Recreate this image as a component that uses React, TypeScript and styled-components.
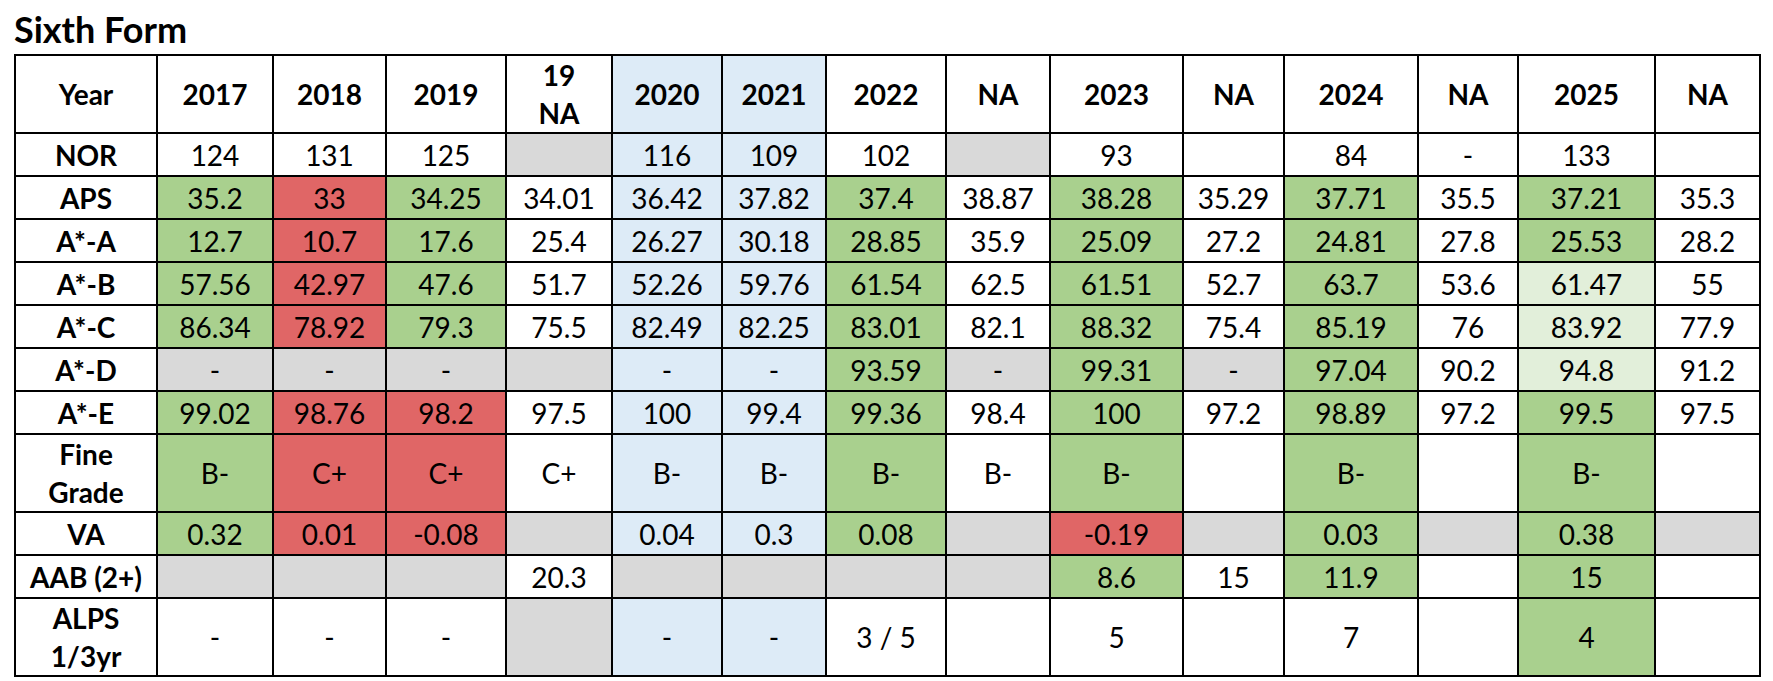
import React from 'react';
import styled, { createGlobalStyle } from 'styled-components';

type Tone = 'w' | 'g' | 'r' | 'b' | 'x' | 'l';

const tones: Record<Tone, string> = {
  w: '#ffffff',
  g: '#a9d08e',
  r: '#e06666',
  b: '#ddebf7',
  x: '#d9d9d9',
  l: '#e2efda',
};

const GlobalStyle = createGlobalStyle`
  body {
    margin: 0;
    background: #ffffff;
    color: #000000;
    font-family: Lato, "Open Sans", sans-serif;
  }
`;

const Page = styled.div`
  padding: 8px 0 0 14px;
`;

const Title = styled.h1`
  margin: 0 0 4px;
  font-size: 36px;
  line-height: 42px;
  font-weight: 700;
`;

const Table = styled.table`
  border-collapse: collapse;
  table-layout: fixed;
  width: 1747px;
`;

const Col = styled.col<{ $w: number }>`
  width: ${p => p.$w}px;
`;

const Row = styled.tr<{ $tall?: boolean }>`
  height: ${p => (p.$tall ? 76 : 43)}px;
`;

const Cell = styled.td<{ $tone: Tone; $bold?: boolean }>`
  border: 2px solid #000000;
  background: ${p => tones[p.$tone]};
  padding: 0;
  text-align: center;
  vertical-align: middle;
  font-size: 28px;
  line-height: 38px;
  font-weight: ${p => (p.$bold ? 700 : 400)};
  white-space: pre-line;
`;

const widths = [142, 116, 113, 120, 106, 110, 104, 120, 104, 133, 101, 134, 100, 137, 105];

// header cells: text and background tone
const header: [string, Tone][] = [
  ['Year', 'w'], ['2017', 'w'], ['2018', 'w'], ['2019', 'w'], ['19\nNA', 'w'],
  ['2020', 'b'], ['2021', 'b'], ['2022', 'w'], ['NA', 'w'], ['2023', 'w'],
  ['NA', 'w'], ['2024', 'w'], ['NA', 'w'], ['2025', 'w'], ['NA', 'w'],
];

type RowData = { label: string; tall?: boolean; cells: [string, Tone][] };

const rows: RowData[] = [
  {
    label: 'NOR',
    cells: [['124', 'w'], ['131', 'w'], ['125', 'w'], ['', 'x'], ['116', 'b'], ['109', 'b'], ['102', 'w'],
      ['', 'x'], ['93', 'w'], ['', 'w'], ['84', 'w'], ['-', 'w'], ['133', 'w'], ['', 'w']],
  },
  {
    label: 'APS',
    cells: [['35.2', 'g'], ['33', 'r'], ['34.25', 'g'], ['34.01', 'w'], ['36.42', 'b'], ['37.82', 'b'], ['37.4', 'g'],
      ['38.87', 'w'], ['38.28', 'g'], ['35.29', 'w'], ['37.71', 'g'], ['35.5', 'w'], ['37.21', 'g'], ['35.3', 'w']],
  },
  {
    label: 'A*-A',
    cells: [['12.7', 'g'], ['10.7', 'r'], ['17.6', 'g'], ['25.4', 'w'], ['26.27', 'b'], ['30.18', 'b'], ['28.85', 'g'],
      ['35.9', 'w'], ['25.09', 'g'], ['27.2', 'w'], ['24.81', 'g'], ['27.8', 'w'], ['25.53', 'g'], ['28.2', 'w']],
  },
  {
    label: 'A*-B',
    cells: [['57.56', 'g'], ['42.97', 'r'], ['47.6', 'g'], ['51.7', 'w'], ['52.26', 'b'], ['59.76', 'b'], ['61.54', 'g'],
      ['62.5', 'w'], ['61.51', 'g'], ['52.7', 'w'], ['63.7', 'g'], ['53.6', 'w'], ['61.47', 'l'], ['55', 'w']],
  },
  {
    label: 'A*-C',
    cells: [['86.34', 'g'], ['78.92', 'r'], ['79.3', 'g'], ['75.5', 'w'], ['82.49', 'b'], ['82.25', 'b'], ['83.01', 'g'],
      ['82.1', 'w'], ['88.32', 'g'], ['75.4', 'w'], ['85.19', 'g'], ['76', 'w'], ['83.92', 'l'], ['77.9', 'w']],
  },
  {
    label: 'A*-D',
    cells: [['-', 'x'], ['-', 'x'], ['-', 'x'], ['', 'x'], ['-', 'b'], ['-', 'b'], ['93.59', 'g'],
      ['-', 'x'], ['99.31', 'g'], ['-', 'x'], ['97.04', 'g'], ['90.2', 'w'], ['94.8', 'l'], ['91.2', 'w']],
  },
  {
    label: 'A*-E',
    cells: [['99.02', 'g'], ['98.76', 'r'], ['98.2', 'r'], ['97.5', 'w'], ['100', 'b'], ['99.4', 'b'], ['99.36', 'g'],
      ['98.4', 'w'], ['100', 'g'], ['97.2', 'w'], ['98.89', 'g'], ['97.2', 'w'], ['99.5', 'g'], ['97.5', 'w']],
  },
  {
    label: 'Fine\nGrade',
    tall: true,
    cells: [['B-', 'g'], ['C+', 'r'], ['C+', 'r'], ['C+', 'w'], ['B-', 'b'], ['B-', 'b'], ['B-', 'g'],
      ['B-', 'w'], ['B-', 'g'], ['', 'w'], ['B-', 'g'], ['', 'w'], ['B-', 'g'], ['', 'w']],
  },
  {
    label: 'VA',
    cells: [['0.32', 'g'], ['0.01', 'r'], ['-0.08', 'r'], ['', 'x'], ['0.04', 'b'], ['0.3', 'b'], ['0.08', 'g'],
      ['', 'x'], ['-0.19', 'r'], ['', 'x'], ['0.03', 'g'], ['', 'x'], ['0.38', 'g'], ['', 'x']],
  },
  {
    label: 'AAB (2+)',
    cells: [['', 'x'], ['', 'x'], ['', 'x'], ['20.3', 'w'], ['', 'x'], ['', 'x'], ['', 'x'],
      ['', 'x'], ['8.6', 'g'], ['15', 'w'], ['11.9', 'g'], ['', 'w'], ['15', 'g'], ['', 'w']],
  },
  {
    label: 'ALPS\n1/3yr',
    tall: true,
    cells: [['-', 'w'], ['-', 'w'], ['-', 'w'], ['', 'x'], ['-', 'b'], ['-', 'b'], ['3 / 5', 'w'],
      ['', 'w'], ['5', 'w'], ['', 'w'], ['7', 'w'], ['', 'w'], ['4', 'g'], ['', 'w']],
  },
];

const App = () => {
  return (
    <Page>
      <GlobalStyle />
      <Title>Sixth Form</Title>
      <Table>
        <colgroup>
          {widths.map((w, i) => (
            <Col key={i} $w={w} />
          ))}
        </colgroup>
        <tbody>
          <Row $tall>
            {header.map(([text, tone], i) => (
              <Cell key={i} $tone={tone} $bold>
                {text}
              </Cell>
            ))}
          </Row>
          {rows.map(row => (
            <Row key={row.label} $tall={row.tall}>
              <Cell $tone="w" $bold>
                {row.label}
              </Cell>
              {row.cells.map(([text, tone], i) => (
                <Cell key={i} $tone={tone}>
                  {text}
                </Cell>
              ))}
            </Row>
          ))}
        </tbody>
      </Table>
    </Page>
  );
};

export default App;
